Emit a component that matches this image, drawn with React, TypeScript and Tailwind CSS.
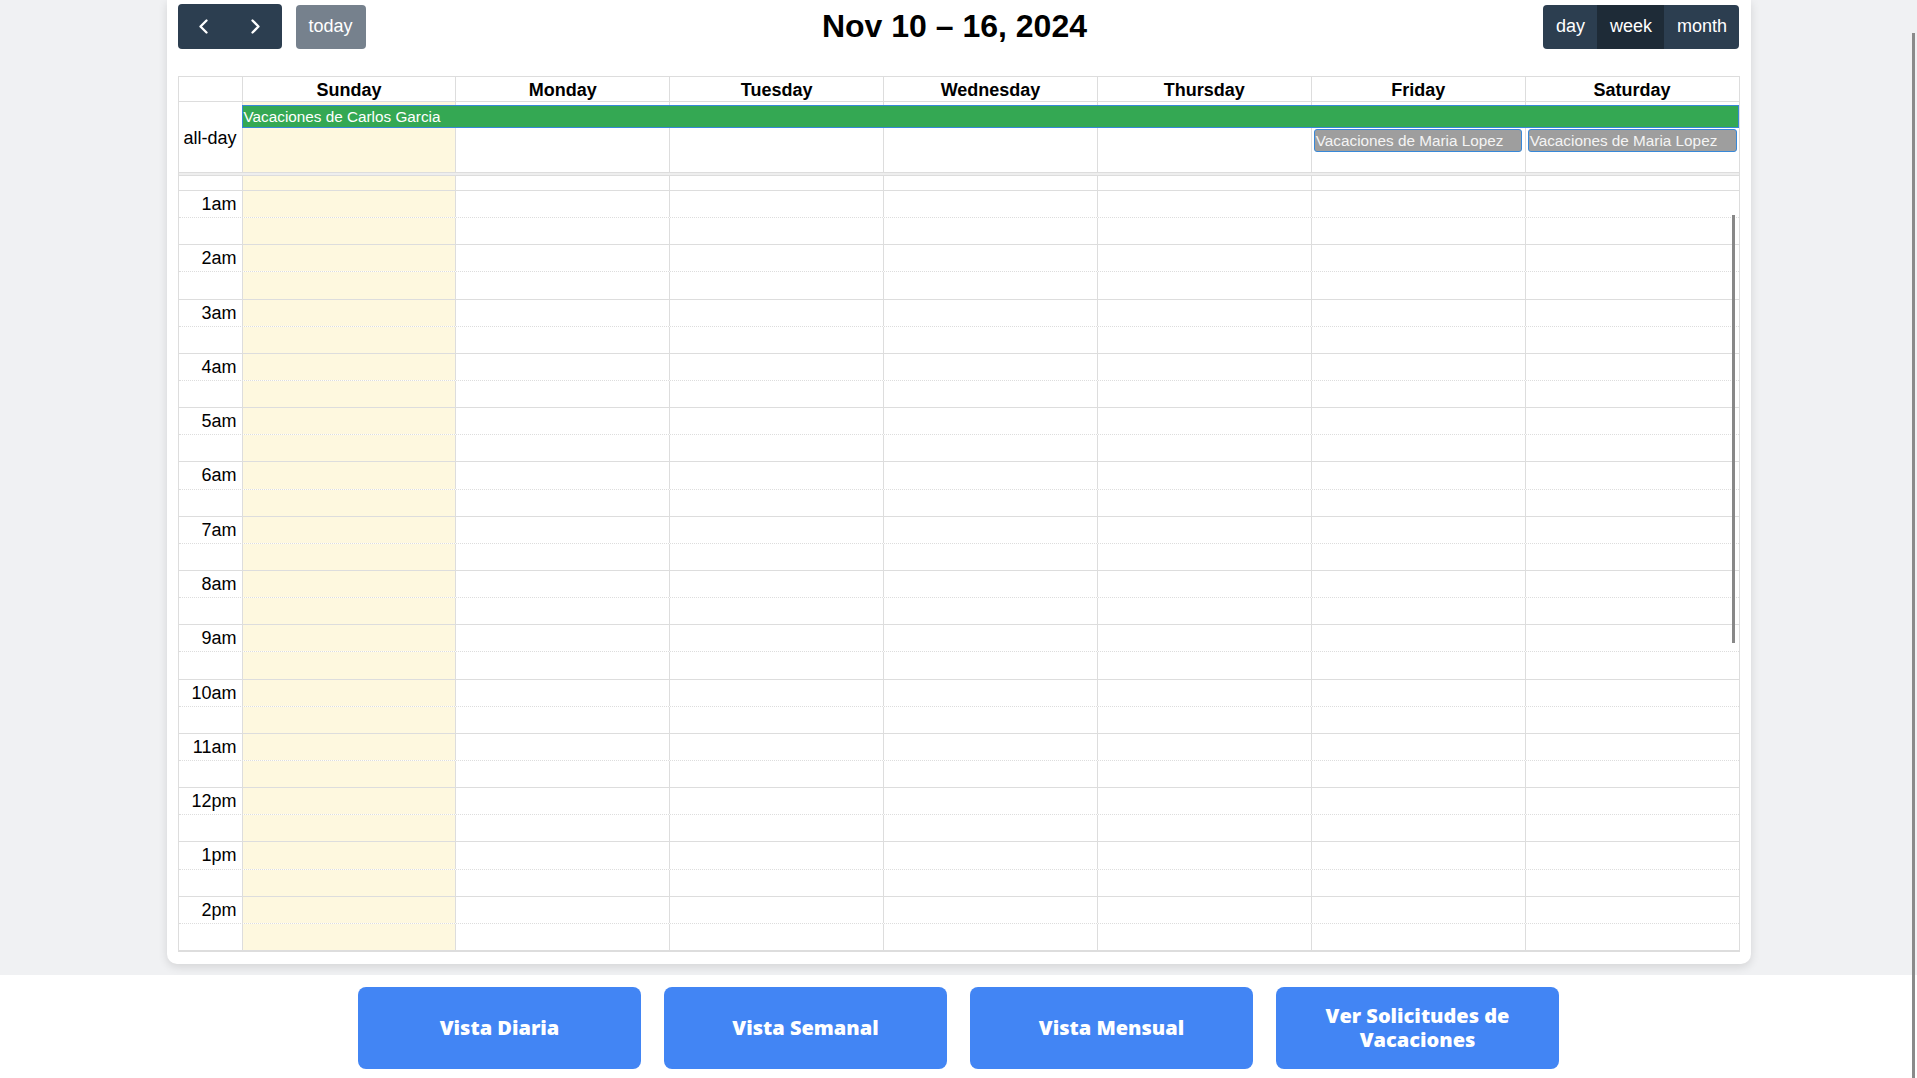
import clsx from 'clsx';

const days = ['Sunday', 'Monday', 'Tuesday', 'Wednesday', 'Thursday', 'Friday', 'Saturday'];
const hours = [
  '', '1am', '2am', '3am', '4am', '5am', '6am', '7am',
  '8am', '9am', '10am', '11am', '12pm', '1pm', '2pm', '',
];

const cols = 'grid grid-cols-[63px_repeat(7,minmax(0,1fr))]';
const dayCols = 'grid grid-cols-[repeat(7,minmax(0,1fr))]';

const Chevron = ({ dir }: { dir: 'left' | 'right' }) => (
  <svg width="11" height="15" viewBox="0 0 11 15" fill="none">
    <polyline
      points={dir === 'left' ? '8.5,1.5 2.5,7.5 8.5,13.5' : '2.5,1.5 8.5,7.5 2.5,13.5'}
      stroke="white"
      strokeWidth="2.3"
      strokeLinecap="round"
      strokeLinejoin="round"
    />
  </svg>
);

const DayCells = () => (
  <>
    {days.map((d, i) => (
      <div key={d} className={clsx('border-l border-[#ddd]', i === 0 && 'bg-[#fef8df]')} />
    ))}
  </>
);

const App = () => {
  return (
    <div className="min-h-screen bg-white font-['Liberation_Sans',Arial,sans-serif] text-[18px] text-black">
      <div className="bg-[#f0f1f3] pb-[11px]">
        <div className="mx-auto w-[1584px] rounded-b-[10px] bg-white px-[11px] pt-[4px] pb-[12px] shadow-[0_3px_10px_rgba(0,0,0,0.12)]">
          {/* toolbar */}
          <div className="flex h-[45px] items-center justify-between">
            <div className="flex items-center gap-[14px]">
              <div className="flex h-[45px] overflow-hidden rounded-[4px] bg-[#2c3e50]">
                <button className="flex w-[52px] items-center justify-center">
                  <Chevron dir="left" />
                </button>
                <button className="flex w-[52px] items-center justify-center">
                  <Chevron dir="right" />
                </button>
              </div>
              <button className="h-[44px] w-[70px] rounded-[4px] bg-[#76818d] leading-[1.5] text-white">
                today
              </button>
            </div>
            <h2 className="mb-[2px] text-[32px] font-bold leading-none">Nov 10 – 16, 2024</h2>
            <div className="flex h-[44px] overflow-hidden rounded-[4px] bg-[#2c3e50] text-white">
              <button className="px-[12.5px] leading-[1.5]">day</button>
              <button className="bg-[#1e2b37] px-[12.5px] leading-[1.5]">week</button>
              <button className="px-[12.5px] leading-[1.5]">month</button>
            </div>
          </div>

          {/* calendar */}
          <div className="mt-[27px] border border-[#ddd]">
            <div className={clsx(cols, 'h-[25px] border-b border-[#ddd]')}>
              <div />
              {days.map((d) => (
                <div key={d} className="flex items-center justify-center border-l border-[#ddd] font-bold">
                  {d}
                </div>
              ))}
            </div>

            <div className={clsx(cols, 'h-[70px]')}>
              <div className="flex items-center justify-end pr-[5px] pt-[2px]">all-day</div>
              <div className="relative col-span-7">
                <div className={clsx(dayCols, 'h-full')}>
                  <DayCells />
                </div>
                <div className={clsx(dayCols, 'absolute inset-0 content-start gap-y-[1px] pt-[3px] text-[15.3px] text-white')}>
                  <div className="col-start-1 col-end-8 row-start-1 h-[23px] border border-[#3788d8] bg-[#34a853] px-[1px] leading-[21px]">
                    Vacaciones de Carlos Garcia
                  </div>
                  <div className="col-start-6 row-start-2 mx-[3px] h-[23px] rounded-[3px] border border-[#3788d8] bg-[#9e9e9e] px-[1px] leading-[21px] text-[#f4f4f4]">
                    Vacaciones de Maria Lopez
                  </div>
                  <div className="col-start-7 row-start-2 ml-[3px] mr-[2px] h-[23px] rounded-[3px] border border-[#3788d8] bg-[#9e9e9e] px-[1px] leading-[21px] text-[#f4f4f4]">
                    Vacaciones de Maria Lopez
                  </div>
                </div>
              </div>
            </div>

            <div className="h-[4px] border-y border-[#ddd] bg-[#eee]" />

            <div className="relative h-[775px] overflow-hidden">
              <div className="mt-[-40.3px]">
                {hours.map((h, idx) => (
                  <div key={idx}>
                    <div className={clsx(cols, 'h-[27.15px] border-t border-[#ddd]')}>
                      <div className="whitespace-nowrap pr-[5px] pt-[3px] text-right leading-[normal]">{h}</div>
                      <DayCells />
                    </div>
                    <div className={clsx(cols, 'h-[27.15px] border-t border-dotted border-[#ddd]')}>
                      <div />
                      <DayCells />
                    </div>
                  </div>
                ))}
              </div>
              <div className="absolute right-[4px] top-[39px] h-[428px] w-[2.5px] bg-[#888]" />
            </div>
          </div>
        </div>
      </div>

      {/* footer actions */}
      <div className="flex justify-center gap-[23px] bg-white pt-[12px] font-['Open_Sans',sans-serif]">
        {['Vista Diaria', 'Vista Semanal', 'Vista Mensual', 'Ver Solicitudes de Vacaciones'].map((label) => (
          <button
            key={label}
            className="flex h-[82px] w-[283px] items-center justify-center rounded-[8px] bg-[#4285f4] px-[40px] text-center text-[20px] font-extrabold leading-[24px] text-white"
          >
            {label}
          </button>
        ))}
      </div>

      <div className="fixed bottom-0 right-[2px] top-[33px] w-[3px] bg-[#8a8a8a]" />
    </div>
  );
};

export default App;
